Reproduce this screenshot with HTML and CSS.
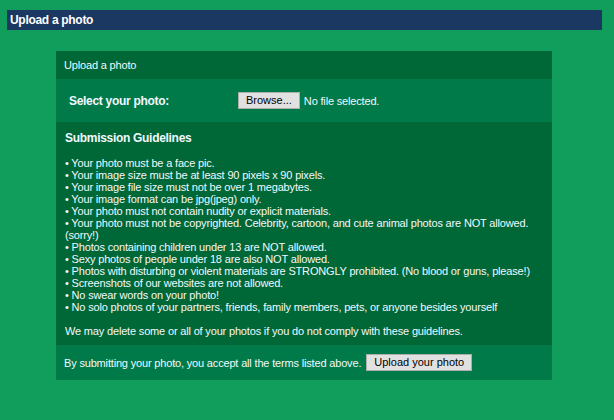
FILE: index.html
```html
<!DOCTYPE html>
<html lang="en">
<head>
    <meta charset="UTF-8">
    <title>Upload a photo</title>
    <link rel="stylesheet" href="styles.css">
</head>
<body>

<div id="page">
    <div class="page-title">Upload a photo</div>

    <div id="upload-box">
        <div class="box-header">Upload a photo</div>

        <div class="select-row">
            <div class="select-label">Select your photo:</div>
            <button class="btn">Browse...</button>
            <span class="file-name">No file selected.</span>
        </div>

        <div class="guidelines">
            <div class="guidelines-title">Submission Guidelines</div>
            <div class="guidelines-list">
                • Your photo must be a face pic.<br>
                • Your image size must be at least 90 pixels x 90 pixels.<br>
                • Your image file size must not be over 1 megabytes.<br>
                • Your image format can be jpg(jpeg) only.<br>
                • Your photo must not contain nudity or explicit materials.<br>
                • Your photo must not be copyrighted. Celebrity, cartoon, and cute animal photos are NOT allowed. (sorry!)<br>
                • Photos containing children under 13 are NOT allowed.<br>
                • Sexy photos of people under 18 are also NOT allowed.<br>
                • Photos with disturbing or violent materials are STRONGLY prohibited. (No blood or guns, please!)<br>
                • Screenshots of our websites are not allowed.<br>
                • No swear words on your photo!<br>
                • No solo photos of your partners, friends, family members, pets, or anyone besides yourself<br>
                <br>
                We may delete some or all of your photos if you do not comply with these guidelines.
            </div>
        </div>

        <div class="box-footer">
            <span>By submitting your photo, you accept all the terms listed above.</span>
            <button class="btn">Upload your photo</button>
        </div>
    </div>
</div>

</body>
</html>
```

FILE: styles.css
```css
body {
    margin: 0px;
    background: #119d5b;
    font-family: "Liberation Sans", Arial, sans-serif;
    font-size: 11px;
    letter-spacing: -0.17px;
    color: #f2f8ff;
}

#page {
    margin: 10px 12px 0 7px;
}

.page-title {
    background-color: #1b3863;
    height: 20px;
    line-height: 20px;
    padding-left: 3px;
    font-size: 12px;
    font-weight: bold;
    letter-spacing: -0.3px;
    color: #ffffff;
}

#upload-box {
    width: 496px;
    margin: 21px 0 0 49px;
}

.box-header {
    background-color: #006837;
    height: 28px;
    line-height: 28px;
    padding-left: 8px;
}

.select-row {
    background-color: #007a49;
    height: 43px;
    display: flex;
    align-items: center;
    padding-left: 13px;
}

.select-label {
    width: 169px;
    font-size: 12px;
    font-weight: bold;
    letter-spacing: -0.3px;
}

.btn {
    font-family: "Liberation Sans", Arial, sans-serif;
    font-size: 11px;
    letter-spacing: 0;
    color: #000000;
    background: #e1e1e1;
    border: 1px solid #adadad;
    height: 17px;
    line-height: 15px;
    padding: 0 7px;
    margin: 0;
}

.file-name {
    margin-left: 4px;
}

.guidelines {
    background-color: #006837;
    padding: 8px 9px 8px 9px;
}

.guidelines-title {
    font-size: 12px;
    font-weight: bold;
    letter-spacing: -0.3px;
    line-height: 16px;
    margin-bottom: 11px;
}

.guidelines-list {
    line-height: 12px;
}

.box-footer {
    background-color: #007a49;
    height: 35px;
    display: flex;
    align-items: center;
    padding-left: 8px;
}

.box-footer .btn {
    margin-left: 5px;
}
```
